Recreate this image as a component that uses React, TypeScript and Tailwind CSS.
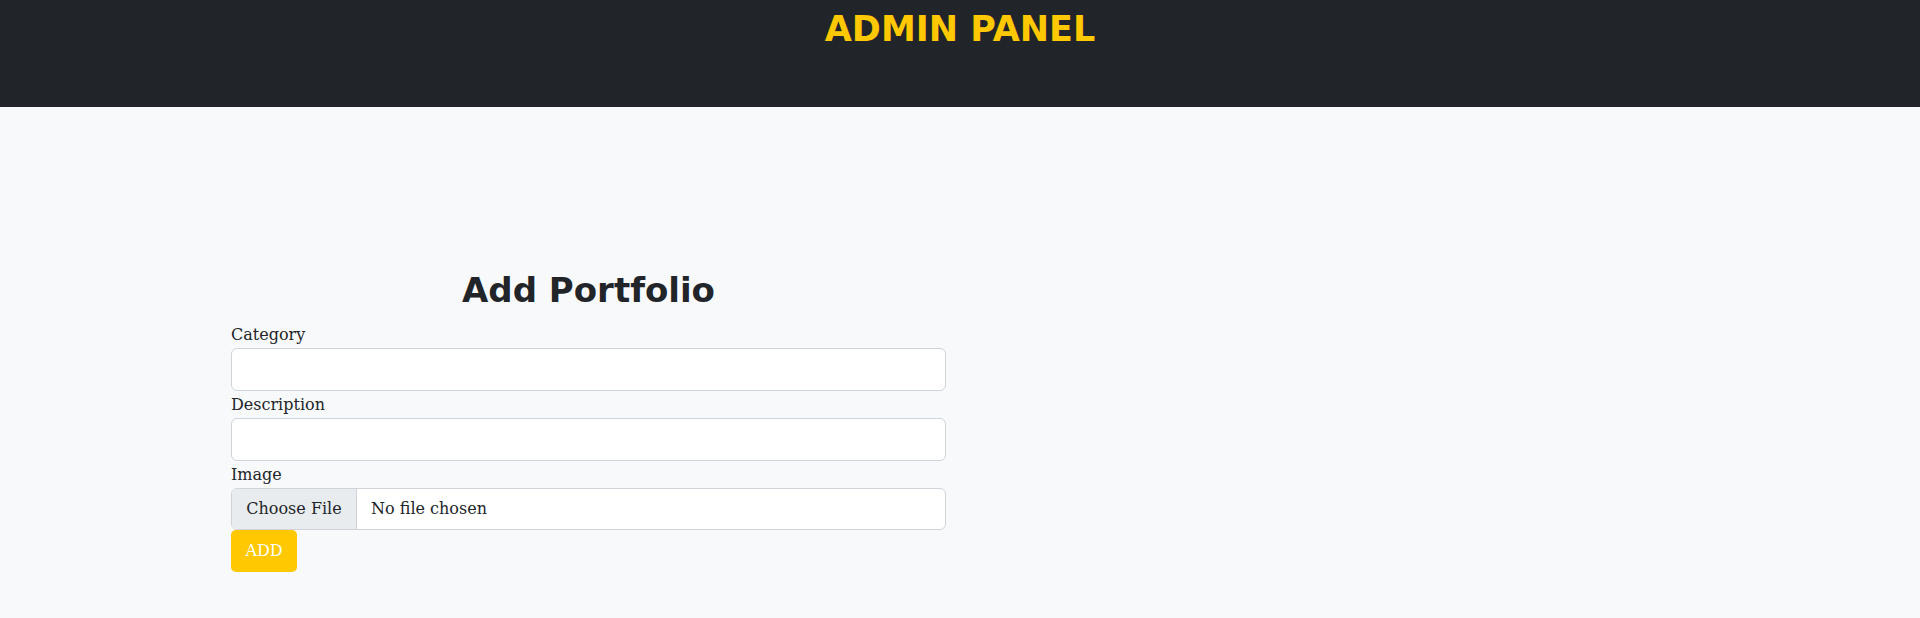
import { useState } from 'react'

const serif = "font-['DejaVu_Serif',serif]"

function Field({ label, value, onChange }: { label: string; value: string; onChange: (v: string) => void }) {
  return (
    <div className="flex flex-col">
      <label className="text-[16px] leading-[27px] text-[#212529]">{label}</label>
      <input
        type="text"
        value={value}
        onChange={(e) => onChange(e.target.value)}
        className="h-[43px] rounded-[6px] border border-[#ced4da] bg-white px-3 text-[16px] text-[#212529] outline-none"
      />
    </div>
  )
}

export default function App() {
  const [category, setCategory] = useState('')
  const [description, setDescription] = useState('')

  return (
    <div className={`min-h-[618px] bg-[#f8f9fa] ${serif}`}>
      {/* Header */}
      <header className="h-[107px] bg-[#212529]">
        <h1 className="pt-[8px] text-center font-['DejaVu_Sans',sans-serif] text-[35px] font-bold leading-[42px] text-[#ffc800]">
          ADMIN PANEL
        </h1>
      </header>

      {/* Form */}
      <main className="pt-[157px]">
        <form className="ml-[231px] flex w-[715px] flex-col" onSubmit={(e) => e.preventDefault()}>
          <h2 className="mb-[5px] text-center font-['DejaVu_Sans',sans-serif] text-[34px] font-bold leading-[52px] text-[#212529]">
            Add Portfolio
          </h2>
          <Field label="Category" value={category} onChange={setCategory} />
          <Field label="Description" value={description} onChange={setDescription} />
          <div className="flex flex-col">
            <label className="text-[16px] leading-[27px] text-[#212529]">Image</label>
            <div className="flex h-[42px] items-stretch overflow-hidden rounded-[6px] border border-[#ced4da] bg-white text-[16px] text-[#212529]">
              <span className="flex w-[125px] items-center justify-center border-r border-[#ced4da] bg-[#e9ecef]">
                Choose File
              </span>
              <span className="flex items-center pl-[14px]">No file chosen</span>
            </div>
          </div>
          <div>
            <button
              type="submit"
              className="h-[42px] w-[66px] rounded-[5px] bg-[#ffc800] text-[16px] text-white"
            >
              ADD
            </button>
          </div>
        </form>
      </main>
    </div>
  )
}
